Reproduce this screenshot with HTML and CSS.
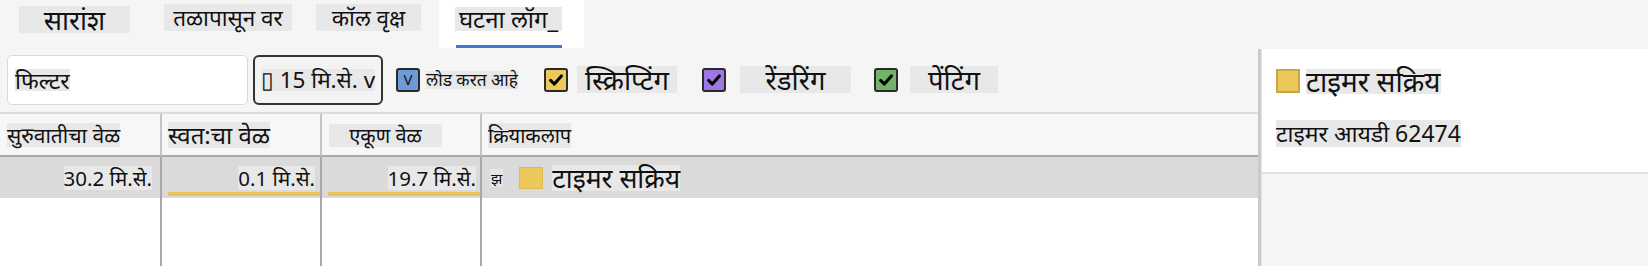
FILE: index.html
```html
<!DOCTYPE html>
<html lang="mr">
<head>
<meta charset="utf-8">
<title>घटना लॉग</title>
<link rel="stylesheet" href="styles.css">
</head>
<body>
<div class="tabs">
  <div class="tab tab-summary"><span class="txt">सारांश</span></div>
  <div class="tab tab-bottom"><span class="txt">तळापासून वर</span></div>
  <div class="tab tab-call"><span class="txt">कॉल वृक्ष</span></div>
  <div class="tab tab-active"><span class="txt">घटना लॉग_</span></div>
</div>
<div class="main">
  <div class="left">
    <div class="toolbar">
      <div class="filter"><span class="txt">फिल्टर</span></div>
      <div class="dropdown"><span class="txt">▯ 15 मि.से. v</span></div>
      <div class="cb cb-blue">V</div>
      <span class="lbl lbl-load txt">लोड करत आहे</span>
      <div class="cb cb-yellow"><svg viewBox="0 0 20 20"><path d="M4 10.5 L8.2 14.5 L16 5.5" fill="none" stroke="#000" stroke-width="3.4" stroke-linecap="round" stroke-linejoin="round"/></svg></div>
      <span class="lbl lbl-script txt">स्क्रिप्टिंग</span>
      <div class="cb cb-purple"><svg viewBox="0 0 20 20"><path d="M4 10.5 L8.2 14.5 L16 5.5" fill="none" stroke="#000" stroke-width="3.4" stroke-linecap="round" stroke-linejoin="round"/></svg></div>
      <span class="lbl lbl-render txt">रेंडरिंग</span>
      <div class="cb cb-green"><svg viewBox="0 0 20 20"><path d="M4 10.5 L8.2 14.5 L16 5.5" fill="none" stroke="#000" stroke-width="3.4" stroke-linecap="round" stroke-linejoin="round"/></svg></div>
      <span class="lbl lbl-paint txt">पेंटिंग</span>
    </div>
    <div class="table">
      <div class="hcell h1"><span class="txt">सुरुवातीचा वेळ</span></div>
      <div class="hcell h2"><span class="txt">स्वत:चा वेळ</span></div>
      <div class="hcell h3"><span class="txt">एकूण वेळ</span></div>
      <div class="hcell h4"><span class="txt">क्रियाकलाप</span></div>
      <div class="cell num v1"><span class="txt">30.2 मि.से.</span></div>
      <div class="cell num v2"><span class="txt">0.1 मि.से.</span><i class="fill" style="width:100%"></i></div>
      <div class="cell num v3"><span class="txt">19.7 मि.से.</span><i class="fill" style="width:100%"></i></div>
      <div class="cell act"><span class="arrow txt">झ</span><span class="swatch"></span><span class="title txt">टाइमर सक्रिय</span></div>
      <div class="fcell"></div>
      <div class="fcell"></div>
      <div class="fcell"></div>
      <div class="fcell last"></div>
    </div>
  </div>
  <div class="panel">
    <div class="panel-top">
      <div class="ptitle"><span class="swatch big"></span><span class="txt">टाइमर सक्रिय</span></div>
      <div class="pline"><span class="txt">टाइमर आयडी 62474</span></div>
    </div>
    <div class="panel-bottom"></div>
  </div>
</div>
</body>
</html>
```

FILE: styles.css
```css
* { box-sizing: border-box; }
html, body { margin: 0; padding: 0; }
body {
  width: 1648px;
  height: 266px;
  overflow: hidden;
  background: #f5f5f5;
  font-family: "Noto Sans", sans-serif;
  color: #111;
}
.txt {
  display: inline-block;
  background: #e8e8e8;
  white-space: nowrap;
}

/* tabs */
.tabs {
  display: flex;
  height: 49px;
  align-items: flex-start;
}
.tab { display: flex; }
.tab .txt { text-align: center; }
.tab-summary { margin-left: 19px; margin-top: 6px; font-size: 27px; }
.tab-summary .txt { width: 111px; line-height: 27px; }
.tab-bottom { margin-left: 34px; margin-top: 4px; font-size: 22.5px; }
.tab-bottom .txt { width: 128px; line-height: 27px; }
.tab-call { margin-left: 24px; margin-top: 4px; font-size: 22.5px; }
.tab-call .txt { width: 105px; line-height: 27px; }
.tab-active {
  margin-left: 18px;
  width: 145px;
  height: 48px;
  background: #fff;
  border-radius: 0 0 3px 3px;
  padding: 7px 0 0 16px;
  position: relative;
  font-size: 24px;
  align-items: flex-start;
}
.tab-active .txt { width: 107px; line-height: 24px; }
.tab-active::after {
  content: "";
  position: absolute;
  left: 17px;
  width: 106px;
  bottom: 0;
  height: 3px;
  background: #3b78d8;
}

/* main split */
.main { display: flex; height: 217px; }
.left { width: 1258px; display: flex; flex-direction: column; }

/* toolbar */
.toolbar {
  height: 65px;
  border-bottom: 2px solid #dcdcdc;
  display: flex;
  align-items: center;
  padding: 0 0 2px 7px;
}
.filter {
  width: 241px;
  height: 50px;
  background: #fff;
  border: 1px solid #dadada;
  border-radius: 5px;
  display: flex;
  align-items: center;
  padding-left: 7px;
  font-size: 23px;
}
.filter .txt { line-height: 22px; }
.dropdown {
  margin-left: 5px;
  width: 130px;
  height: 50px;
  border: 2px solid #333;
  border-radius: 6px;
  background: #f3f3f3;
  display: flex;
  align-items: center;
  justify-content: center;
  font-size: 22.5px;
}
.dropdown .txt { line-height: 22px; }
.cb {
  width: 24px;
  height: 24px;
  border: 2px solid #2a2a2a;
  border-radius: 3px;
  display: flex;
  align-items: center;
  justify-content: center;
  flex: none;
}
.cb svg { width: 18px; height: 18px; }
.cb-blue { margin-left: 13px; background: #6d9ad8; font-size: 15px; line-height: 1; color: #111; }
.cb-yellow { margin-left: 26px; background: #ecc85a; }
.cb-purple { margin-left: 25px; background: #9d78e2; }
.cb-green { margin-left: 23px; background: #72b466; }
.lbl { text-align: center; flex: none; }
.lbl-load { margin-left: 6px; width: 92px; font-size: 17.3px; line-height: 18px; }
.lbl-script { margin-left: 9px; width: 100px; font-size: 27.5px; line-height: 27px; }
.lbl-render { margin-left: 14px; width: 111px; font-size: 27.5px; line-height: 27px; }
.lbl-paint { margin-left: 12px; width: 88px; font-size: 27.5px; line-height: 27px; }

/* table */
.table {
  flex: 1;
  display: grid;
  grid-template-columns: 162px 160px 160px 1fr;
  grid-template-rows: 43px 41px 1fr;
  background: #fff;
}
.hcell {
  background: #f7f7f7;
  border-right: 2px solid #c4c4c4;
  border-bottom: 2px solid #a8a8a8;
  display: flex;
  align-items: center;
  padding-left: 7px;
  padding-top: 1px;
}
.hcell.h1 { font-size: 21px; }
.hcell.h1 .txt { line-height: 24px; }
.hcell.h2 { font-size: 24px; padding-left: 6px; }
.hcell.h2 .txt { line-height: 26px; }
.hcell.h3 { font-size: 20px; }
.hcell.h3 .txt { width: 113px; text-align: center; line-height: 23px; }
.hcell.h4 { font-size: 20px; border-right: none; padding-left: 6px; }
.hcell.h4 .txt { line-height: 25px; }
.cell {
  background: #dadada;
  border-right: 2px solid #a8a8a8;
  display: flex;
  align-items: center;
  font-size: 20.5px;
  position: relative;
}
.cell .txt { line-height: 24px; }
.cell.num { justify-content: flex-end; }
.cell.v1 { padding-right: 8px; }
.cell.v2 { padding-right: 5px; }
.cell.v3 { padding-right: 4px; }
.cell .fill {
  position: absolute;
  right: 0;
  bottom: 2px;
  max-width: calc(100% - 6px);
  height: 4px;
  background: #e9c45a;
}
.cell.act { border-right: none; padding-left: 8px; }
.cell .arrow { font-size: 15px; line-height: 18px; background: #e6e6e6; padding: 0 1px; }
.swatch {
  display: inline-block;
  width: 24px;
  height: 22px;
  background: #ecc85a;
  border: 1px solid #e2bb4c;
  margin-left: 16px;
  flex: none;
}
.cell .title { margin-left: 9px; font-size: 26.6px; line-height: 26px; }
.fcell { border-right: 2px solid #a8a8a8; }
.fcell.last { border-right: none; }

/* details panel */
.panel {
  width: 390px;
  border-left: 3px solid #cbcbcb;
  display: flex;
  flex-direction: column;
}
.panel-top {
  height: 125px;
  background: #fff;
  border-left: 1px solid #e6e6e6;
  border-bottom: 2px solid #e2e2e2;
  padding: 19px 0 0 14px;
}
.ptitle { display: flex; align-items: center; height: 26px; font-size: 28px; }
.ptitle .txt { line-height: 25px; }
.swatch.big { margin-left: 0; width: 24px; height: 24px; border: 2px solid #c9a443; margin-right: 6px; }
.pline { margin-top: 23px; height: 27px; font-size: 23px; }
.pline .txt { line-height: 27px; }
.panel-bottom { flex: 1; background: #f5f5f5; border-left: 1px solid #e6e6e6; }
```
